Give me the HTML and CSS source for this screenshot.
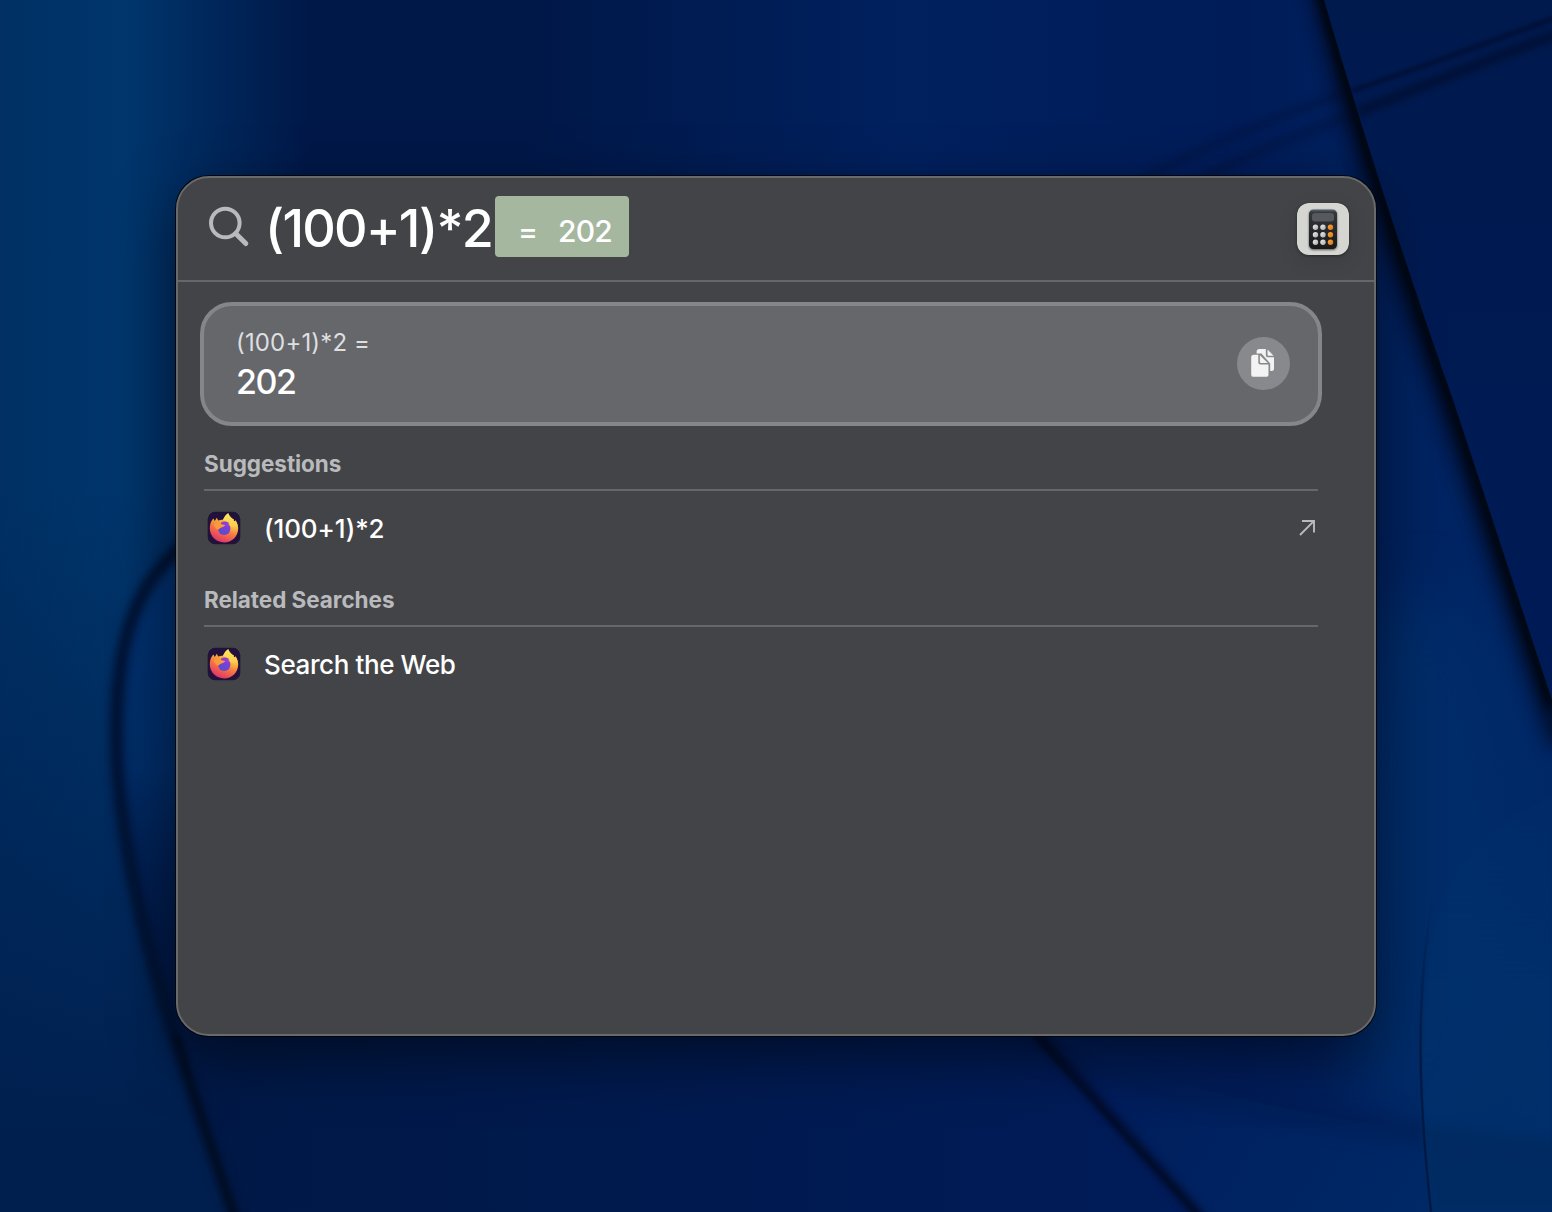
FILE: index.html
```html
<!DOCTYPE html>
<html lang="en">
  <head>
    <meta charset="UTF-8" />
    <meta name="viewport" content="width=device-width, initial-scale=1.0" />
    <title>Spotlight</title>
    <link rel="stylesheet" href="styles.css">
  </head>

  <body>
    <svg class="wallpaper" viewBox="0 0 1552 1212" preserveAspectRatio="none" aria-hidden="true">
      <defs>
        <linearGradient id="base" x1="0" y1="0" x2="1" y2="0">
          <stop offset="0" stop-color="#003064" />
          <stop offset=".08" stop-color="#00366c" />
          <stop offset=".14" stop-color="#00265a" />
          <stop offset=".2" stop-color="#001848" />
          <stop offset=".34" stop-color="#001848" />
          <stop offset=".58" stop-color="#00205e" />
          <stop offset=".8" stop-color="#001c58" />
          <stop offset="1" stop-color="#002867" />
        </linearGradient>
        <linearGradient id="low" x1="0" y1="0" x2="0" y2="1">
          <stop offset=".4" stop-color="#001f50" stop-opacity="0" />
          <stop offset=".95" stop-color="#001f4e" />
        </linearGradient>
        <linearGradient id="floor" x1="0" y1="0" x2="1" y2="0">
          <stop offset="0" stop-color="#001844" />
          <stop offset="1" stop-color="#001c5a" />
        </linearGradient>
        <linearGradient id="foldLight" gradientUnits="userSpaceOnUse" x1="0" y1="540" x2="0" y2="1000">
          <stop offset="0" stop-color="#00306e" />
          <stop offset=".5" stop-color="#002c66" />
          <stop offset="1" stop-color="#001a4c" stop-opacity="0" />
        </linearGradient>
        <linearGradient id="corner" x1="0" y1="0" x2="1" y2=".2">
          <stop offset="0" stop-color="#001a58" />
          <stop offset="1" stop-color="#002a68" />
        </linearGradient>
        <linearGradient id="wedge" x1="0" y1="0" x2="0" y2="1">
          <stop offset="0" stop-color="#001a4e" />
          <stop offset="1" stop-color="#001a56" />
        </linearGradient>
        <linearGradient id="orb" gradientUnits="userSpaceOnUse" x1="0" y1="780" x2="0" y2="980">
          <stop offset="0" stop-color="#00316c" stop-opacity=".3" />
          <stop offset="1" stop-color="#00316c" />
        </linearGradient>
        <linearGradient id="edgeFade" gradientUnits="userSpaceOnUse" x1="0" y1="890" x2="0" y2="1060">
          <stop offset="0" stop-color="#001d4a" stop-opacity="0" />
          <stop offset="1" stop-color="#001a45" />
        </linearGradient>
        <filter id="blur2" color-interpolation-filters="sRGB"><feGaussianBlur stdDeviation="2" /></filter>
        <filter id="blur4" color-interpolation-filters="sRGB" x="-30%" y="-30%" width="160%" height="160%"><feGaussianBlur stdDeviation="4" /></filter>
        <filter id="blur9" color-interpolation-filters="sRGB" x="-40%" y="-40%" width="180%" height="180%"><feGaussianBlur stdDeviation="9" /></filter>
        <filter id="blur30" color-interpolation-filters="sRGB" x="-80%" y="-50%" width="260%" height="200%"><feGaussianBlur stdDeviation="30" /></filter>
        <clipPath id="leftOfWedge"><path d="M0 0H1324C1350 90 1400 250 1453 400L1552 700V1212H0Z" /></clipPath>
      </defs>

      <rect width="1552" height="1212" fill="url(#base)" />
      <rect width="700" height="1212" fill="url(#low)" />

      <!-- left fold -->
      <path d="M200 535C130 575 104 660 118 770C132 900 165 1010 234 1212H1240L1035 1030L600 700Z" fill="url(#floor)" />
      <path d="M200 535C130 575 104 660 118 770C126 850 145 930 176 1030H260V535Z" fill="url(#foldLight)" />
      <path d="M190 540C130 585 113 650 117 760C124 890 166 1020 236 1222" fill="none" stroke="#001232" stroke-width="13" filter="url(#blur4)" />
      <path d="M176 1035C190 1085 210 1140 236 1222" fill="none" stroke="#000e26" stroke-width="7" filter="url(#blur2)" />

      <!-- light area right of the window -->
      <ellipse cx="1425" cy="860" rx="95" ry="270" fill="#002e6a" opacity=".85" filter="url(#blur30)" />

      <!-- bottom right folds -->
      <path d="M1035 1030C1150 1085 1320 1125 1552 1146V1212H1198Z" fill="url(#corner)" />
      <path d="M1010 1040C1150 1095 1320 1128 1570 1148" fill="none" stroke="#001a4c" stroke-width="14" opacity=".6" filter="url(#blur9)" />
      <path d="M1552 795C1470 835 1440 880 1430 950C1414 1060 1422 1130 1432 1212H1552Z" fill="url(#orb)" opacity=".8" filter="url(#blur2)" />
      <path d="M1420 1125L1570 1142V1212H1432Z" fill="#002a60" opacity=".8" filter="url(#blur4)" />
      <path d="M1432 900C1414 1010 1420 1110 1431 1212" fill="none" stroke="url(#edgeFade)" stroke-width="2.5" />
      <path d="M1035 1030L1203 1220" fill="none" stroke="#000d2e" stroke-width="9" filter="url(#blur4)" />
      <path d="M1035 1036L1199 1216" fill="none" stroke="#000c28" stroke-width="4" filter="url(#blur2)" />

      <!-- right wedge -->
      <path d="M1324 0C1350 90 1400 250 1453 400L1552 700V0Z" fill="url(#wedge)" />
      <path d="M1570 12C1490 42 1430 64 1352 91" fill="none" stroke="#000e30" stroke-width="4" filter="url(#blur2)" />
      <path d="M1570 30C1490 58 1430 84 1358 112" fill="none" stroke="#000e30" stroke-width="8" filter="url(#blur4)" />
      <path d="M1345 93C1280 115 1210 145 1140 180" fill="none" stroke="#001440" stroke-width="6" opacity=".8" filter="url(#blur4)" />
      <path d="M1360 112C1300 134 1250 152 1200 180" fill="none" stroke="#001440" stroke-width="9" opacity=".6" filter="url(#blur4)" />
      <g clip-path="url(#leftOfWedge)">
        <path d="M1318 -30C1344 90 1394 250 1447 400L1562 745" fill="none" stroke="#000a22" stroke-width="24" opacity=".85" filter="url(#blur9)" />
        <path d="M1318 -20C1348 90 1398 250 1451 400L1552 706" fill="none" stroke="#00060f" stroke-width="11" filter="url(#blur4)" />
      </g>
    </svg>

    <main class="spotlight">
      <header class="searchbar">
        <svg class="magnifier" viewBox="0 0 42 42">
          <circle cx="17.3" cy="17" r="14.3" fill="none" stroke="currentColor" stroke-width="4" />
          <path d="M27.7 27.5L37.8 37.6" stroke="currentColor" stroke-width="5" stroke-linecap="round" />
        </svg>
        <span class="query">(100+1)*2</span>
        <span class="completion"><span class="equals">=</span><span>202</span></span>
        <svg class="calculator" viewBox="0 0 52 52">
          <defs>
            <linearGradient id="calcBody" x1="0" y1="0" x2="0" y2="1">
              <stop offset="0" stop-color="#5a6672" />
              <stop offset=".08" stop-color="#34373b" />
              <stop offset="1" stop-color="#17181a" />
            </linearGradient>
            <linearGradient id="grey" x1="0" y1="0" x2="1" y2="1">
              <stop offset="0" stop-color="#efefef" />
              <stop offset="1" stop-color="#a9a9a9" />
            </linearGradient>
            <linearGradient id="orange" x1="0" y1="0" x2="1" y2="1">
              <stop offset="0" stop-color="#ffa63a" />
              <stop offset="1" stop-color="#d87413" />
            </linearGradient>
          </defs>
          <rect width="52" height="52" rx="11.5" fill="#d5d5d2" />
          <rect class="calc-body" x="12" y="6.5" width="28" height="39.5" rx="4.5" fill="url(#calcBody)" />
          <rect x="15" y="10" width="22" height="8.6" rx="3" fill="#58595c" />
          <g fill="url(#grey)">
            <circle cx="18.5" cy="24.2" r="2.7" /><circle cx="26" cy="24.2" r="2.7" />
            <circle cx="18.5" cy="31.7" r="2.7" /><circle cx="26" cy="31.7" r="2.7" />
            <circle cx="18.5" cy="39.2" r="2.7" /><circle cx="26" cy="39.2" r="2.7" />
          </g>
          <g fill="url(#orange)">
            <circle cx="33.5" cy="24.2" r="2.7" /><circle cx="33.5" cy="31.7" r="2.7" /><circle cx="33.5" cy="39.2" r="2.7" />
          </g>
        </svg>
      </header>

      <div class="results">
        <section class="answer">
          <div>
            <p class="expression">(100+1)*2 =</p>
            <p class="value">202</p>
          </div>
          <button class="copy" aria-label="Copy">
            <svg viewBox="0 0 24 28">
              <path d="M8.5 0H14.8V6.2A2 2 0 0 0 16.8 8.2H23V19.5A2.5 2.5 0 0 1 20.5 22H19.2V14.6L10.5 4.5H5.6V3A3 3 0 0 1 8.5 0Z" />
              <path d="M16.5 .5L22.6 6.7H17.5A1 1 0 0 1 16.5 5.7Z" />
              <path d="M2.8 5.7H7.3V13.5A2 2 0 0 0 9.3 15.5H17.5V25.2A2.6 2.6 0 0 1 14.9 27.8H2.8A2.6 2.6 0 0 1 .2 25.2V8.3A2.6 2.6 0 0 1 2.8 5.7Z" />
              <path d="M8.9 6.3L16.8 14H9.9A1 1 0 0 1 8.9 13Z" />
            </svg>
          </button>
        </section>

        <section class="group">
          <h2>Suggestions</h2>
          <a class="row">
            <svg class="firefox" viewBox="0 0 34 34"><use href="#firefox" /></svg>
            <span class="sum">(100+1)*2</span>
            <svg class="arrow" viewBox="0 0 16 16">
              <path d="M1 15L14.8 1.2M3 1H15V12.5" fill="none" stroke="currentColor" stroke-width="1.9" />
            </svg>
          </a>
        </section>

        <section class="group">
          <h2>Related Searches</h2>
          <a class="row">
            <svg class="firefox" viewBox="0 0 34 34"><use href="#firefox" /></svg>
            <span class="web">Search the Web</span>
          </a>
        </section>
      </div>
    </main>

    <svg class="sprite" aria-hidden="true">
      <defs>
        <linearGradient id="flame" x1=".75" y1=".05" x2=".3" y2="1">
          <stop offset="0" stop-color="#fbe04e" />
          <stop offset=".35" stop-color="#f9a83c" />
          <stop offset=".65" stop-color="#f46a48" />
          <stop offset="1" stop-color="#dc2f6e" />
        </linearGradient>
        <linearGradient id="tail" x1=".5" y1="0" x2=".5" y2="1">
          <stop offset="0" stop-color="#fbe65c" />
          <stop offset=".55" stop-color="#fbce4c" />
          <stop offset="1" stop-color="#fb8a3c" stop-opacity="0" />
        </linearGradient>
        <linearGradient id="globe" x1=".7" y1="0" x2=".3" y2="1">
          <stop offset="0" stop-color="#9436dc" />
          <stop offset="1" stop-color="#5150c8" />
        </linearGradient>
        <symbol id="firefox" viewBox="0 0 34 34">
          <rect x=".7" y=".7" width="32.6" height="32.6" rx="7.5" fill="#20123a" />
          <path d="M3.5 12.5C4 10.5 5.2 8.8 6.4 7.6L7.8 10L9.8 6.8L11.2 9.6C13 8.8 14.5 8.6 16 8.8C17.2 6.2 18.8 3.5 21.2 2.2C22 4.6 23.5 5.8 25 7.4L26.6 8.2L27 10.4L28.6 9.6C30.4 12 31.4 15 31.2 18.2C30.7 25.8 24.6 31.4 17.2 31.4C9 31.4 2.8 25.2 2.8 17.6C2.8 15.8 3 14 3.5 12.5Z" fill="url(#flame)" />
          <path d="M16 8.8C17.2 6.2 18.8 3.5 21.2 2.2C22 4.6 23.5 5.8 25 7.4L26.6 8.2L27 10.4L28.6 9.6C31.3 14 31.6 20 28.4 24.6L22.5 20L22.6 12.5Z" fill="url(#tail)" />
          <circle cx="17.2" cy="17.8" r="6.2" fill="url(#globe)" />
          <path d="M14.3 11.2C17 9.8 20.5 10.4 22.4 12.3L20.6 12.8L23 15.5L20 16L14.5 13Z" fill="#8f3dd8" />
          <path d="M6.8 13.4C9 12 12 12 14.5 13.2L18.2 14.1C17.6 15.9 15.5 16.2 13.7 16.7C12.6 17.2 12.2 18.3 10.8 18.7C9.2 18 7.6 16 6.8 13.4Z" fill="#fb9a3a" />
        </symbol>
      </defs>
    </svg>
  </body>
</html>
```

FILE: styles.css
```css
* {
  box-sizing: border-box;
}
body {
  margin: 0;
  height: 100vh;
  overflow: hidden;
  display: grid;
  place-items: center;
  background-color: #001a50;
  color: #fff;
  font-family: Inter, "Liberation Sans", sans-serif;
  font-feature-settings: "calt" 0;
}
h2,
p {
  margin: 0;
}
.wallpaper {
  position: absolute;
  inset: 0;
  width: 100%;
  height: 100%;
}
.sprite {
  position: absolute;
  width: 0;
  height: 0;
}
.spotlight {
  position: relative;
  width: 1200px;
  height: 860px;
  border: 2px solid #6a6a6b;
  border-radius: 33px;
  background-color: #434447;
  box-shadow: 0 0 0 1px #00050f, 0 20px 60px rgba(0, 0, 0, 0.5);
}

/* search field */
.searchbar {
  display: flex;
  align-items: center;
  height: 104px;
  padding: 0 25px 0 30px;
  border-bottom: 2px solid #66676a;
}
.magnifier {
  width: 42px;
  height: 42px;
  margin-top: -5px;
  color: #b9babd;
}
.query {
  width: 228px;
  margin-left: 15px;
  font-size: 52px;
  font-weight: 500;
  line-height: 60px;
  letter-spacing: -1.75px;
  white-space: nowrap;
}
.completion {
  display: flex;
  gap: 20px;
  width: 134px;
  height: 61px;
  margin: -5px 0 0 2px;
  padding: 5px 0 0 23px;
  border-radius: 4px;
  background-color: #a5b89f;
  font-size: 30px;
  font-weight: 500;
  line-height: 61px;
  letter-spacing: -0.8px;
}
.equals {
  width: 20px;
}
.calculator {
  width: 52px;
  height: 52px;
  margin-left: auto;
  border-radius: 12px;
  box-shadow: 0 1px 3px rgba(0, 0, 0, 0.35), 0 6px 20px rgba(0, 0, 0, 0.1);
}
.calc-body {
  filter: drop-shadow(0 1px 1px rgba(0, 0, 0, 0.6));
}

/* results */
.results {
  padding: 20px 52px 0 22px;
}
.answer {
  display: flex;
  align-items: center;
  justify-content: space-between;
  height: 124px;
  padding: 0 28px 0 32px;
  border: 4px solid #858689;
  border-radius: 32px;
  background-color: #66676b;
}
.expression {
  font-size: 24px;
  line-height: 36px;
  letter-spacing: 0.15px;
  color: #dedfe1;
}
.value {
  font-size: 34px;
  font-weight: 500;
  line-height: 42px;
  letter-spacing: -1.5px;
}
.copy {
  display: grid;
  place-items: center;
  width: 53px;
  height: 53px;
  margin-top: -1px;
  padding: 0 2px 1px 0;
  border: none;
  border-radius: 50%;
  background-color: #88898c;
}
.copy svg {
  width: 24px;
  height: 28px;
  fill: #f3f3f3;
}
.group {
  height: 136px;
  margin: 0 4px;
}
h2 {
  height: 65px;
  padding-top: 22px;
  border-bottom: 2px solid #66676a;
  font-size: 22.5px;
  font-weight: 650;
  line-height: 32px;
  letter-spacing: -0.05px;
  color: #b9babd;
}
.row {
  display: flex;
  align-items: center;
  height: 74px;
  padding: 0 3px 0 3px;
  font-size: 26px;
  font-weight: 500;
}
.firefox {
  width: 34px;
  height: 34px;
  margin-right: 23px;
}
.sum {
  letter-spacing: -0.1px;
}
.web {
  letter-spacing: -0.4px;
}
.arrow {
  width: 16px;
  height: 16px;
  margin-left: auto;
  color: #b9babd;
}
```
